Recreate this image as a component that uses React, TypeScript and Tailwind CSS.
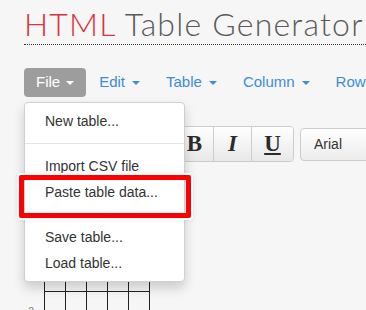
import React from "react";

function Caret({ color, ml }: { color: string; ml: number }) {
  return (
    <span
      className="inline-block align-middle"
      style={{
        marginLeft: ml,
        width: 0,
        height: 0,
        borderLeft: "4px solid transparent",
        borderRight: "4px solid transparent",
        borderTop: `4px solid ${color}`,
      }}
    />
  );
}

export default function App() {
  const navItems = ["Edit", "Table", "Column", "Row"];
  const rows = [0, 1, 2, 3, 4];
  return (
    <div className="relative w-[366px] h-[310px] overflow-hidden bg-[#f6f6f6] font-['Liberation_Sans',Arial,sans-serif]">
      {/* Title */}
      <div className="pl-[24px] pt-[4px]">
        <div className="h-[40px] whitespace-nowrap font-['Lato',sans-serif] font-light text-[32px] leading-[40px] tracking-[1.2px]">
          <span className="text-[#d8323c]">HTML</span>
          <span className="text-[#5a5a5a]"> Table Generator</span>
        </div>
        <div className="border-b border-dotted border-[#333] w-[400px]" />
      </div>

      {/* Nav */}
      <div className="flex items-center pl-[24px] mt-[23px] h-[29px] whitespace-nowrap text-[15px]">
        <div className="shrink-0 h-[29px] flex items-center pl-[12px] pr-[12px] rounded-[4px] bg-[#9d9d9d] text-white">
          File
          <Caret color="#ffffff" ml={6} />
        </div>
        {navItems.map((n) => (
          <div key={n} className="shrink-0 h-[29px] flex items-center px-[13px] text-[#3c8dd5]">
            {n}
            <Caret color="#3c8dd5" ml={7} />
          </div>
        ))}
      </div>

      {/* Toolbar behind */}
      <div className="flex items-center mt-[29px] ml-[175px] h-[36px]">
        <div className="shrink-0 flex h-[36px] border border-[#cccccc] rounded-[4px] overflow-hidden">
          <div className="w-[37px] flex items-center justify-center bg-gradient-to-b from-white to-[#e8e8e8] font-['Liberation_Serif',serif] font-bold text-[23px] text-[#2b2b2b]">
            B
          </div>
          <div className="w-[38px] flex items-center justify-center border-l border-[#cccccc] bg-gradient-to-b from-white to-[#e8e8e8] font-['Liberation_Serif',serif] font-bold italic text-[23px] text-[#2b2b2b]">
            I
          </div>
          <div className="w-[42px] flex items-center justify-center border-l border-[#cccccc] bg-gradient-to-b from-white to-[#e8e8e8] font-['Liberation_Serif',serif] font-bold underline text-[23px] text-[#2b2b2b]">
            U
          </div>
        </div>
        <div className="shrink-0 ml-[6px] h-[33px] w-[90px] flex items-center pl-[13px] border border-[#cccccc] rounded-[4px] bg-gradient-to-b from-white to-[#ececec] text-[14px] text-[#333]">
          Arial
        </div>
      </div>

      {/* Table behind */}
      <div className="flex mt-[66px] ml-[28px]">
        <div className="w-[16px] flex flex-col">
          {rows.map((r) => (
            <div key={r} className="h-[21px] text-[11px] text-[#888] leading-[21px] pt-[10px]">
              {r === 3 ? "2" : ""}
            </div>
          ))}
        </div>
        <div className="flex flex-col border-l border-t border-[#222]">
          {rows.map((r) => (
            <div key={r} className="flex">
              {[0, 1, 2, 3, 4].map((c) => (
                <div key={c} className="w-[21px] h-[21px] border-r border-b border-[#222]" />
              ))}
            </div>
          ))}
        </div>
      </div>

      {/* Dropdown menu */}
      <div className="absolute left-[24px] top-[102px] w-[161px] bg-white border border-[#cfcfcf] rounded-[4px] shadow-[0_6px_12px_rgba(0,0,0,0.175)] py-[5px] text-[14px] text-[#333]">
        <div className="px-[20px] leading-[20px] py-[3px]">New table...</div>
        <div className="my-[9px] h-px bg-[#e5e5e5]" />
        <div className="px-[20px] leading-[20px] py-[3px]">Import CSV file</div>
        <div className="px-[20px] leading-[20px] py-[3px]">Paste table data...</div>
        <div className="my-[9px] h-px bg-[#e5e5e5]" />
        <div className="px-[20px] leading-[20px] py-[3px]">Save table...</div>
        <div className="px-[20px] leading-[20px] py-[3px]">Load table...</div>
      </div>

      {/* Red highlight */}
      <div className="absolute left-[19px] top-[175px] w-[172px] h-[43px] border-[5px] border-[#ff0000] rounded-[2px] shadow-[0_0_0_2px_#ffffff,0_0_4px_2px_rgba(0,0,0,0.08)]" />
    </div>
  );
}
